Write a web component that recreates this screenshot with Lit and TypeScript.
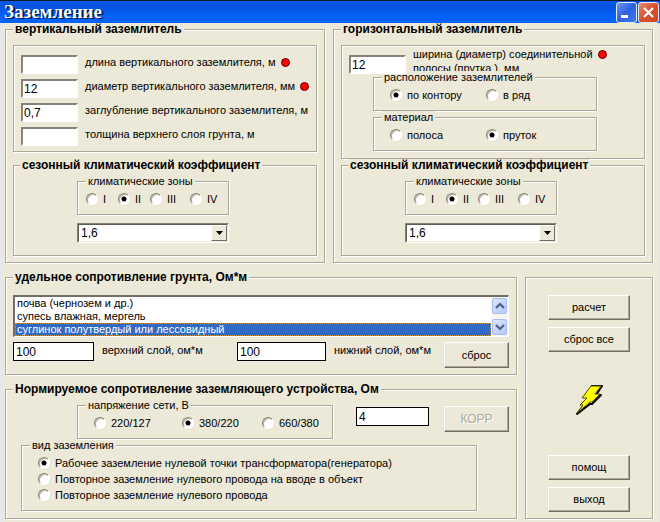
import { LitElement, html, css, svg } from "lit";
import { customElement, property } from "lit/decorators.js";

const shared = css`
  * { box-sizing: border-box; }
  fieldset {
    margin: 0;
    padding: 0;
    min-width: 0;
    border: 1px solid #aca899;
    box-shadow: 1px 1px 0 #fff, inset 1px 1px 0 #fff;
  }
  legend {
    height: 13px;
    line-height: 13px;
    margin-left: 8px;
    padding: 0 2px;
    background: #ece9d8;
    white-space: nowrap;
  }
  .choices {
    display: grid;
    align-items: center;
    height: 22px;
  }
  label { white-space: nowrap; }
  .choice {
    display: flex;
    align-items: center;
    gap: 5px;
  }
  input[type="radio"] {
    appearance: none;
    flex: none;
    width: 12px;
    height: 12px;
    margin: 0;
    border: 1px solid;
    border-color: #85827a #fff #fff #85827a;
    border-radius: 50%;
    background: #fff;
    box-shadow: inset 1px 1px 0 #b5b2a4;
  }
  input[type="radio"]:checked {
    background: radial-gradient(circle at 5px 5px, #000 2px, #fff 3px);
  }
`;

interface Option { text: string; checked?: boolean; }

const radios = (name: string, items: Option[]) => items.map((o) => html`
  <label class="choice"><input type="radio" name=${name} .checked=${!!o.checked}>${o.text}</label>`);

@customElement("seasonal-factor")
class SeasonalFactor extends LitElement {
  @property() name = "zone";

  static styles = [shared, css`
    :host { display: block; }
    .season > legend { font-weight: bold; font-size: 12px; margin-left: 6px; }
    .body { padding: 3px 87px 12px 63px; }
    .zones { padding-bottom: 4px; }
    .choices { grid-template-columns: 32px 32px 40px auto; padding-left: 8px; }
    .combo {
      position: relative;
      margin-top: 8px;
      height: 20px;
      border: 1px solid;
      border-color: #85827a #fff #fff #85827a;
    }
    select {
      appearance: none;
      width: 100%;
      height: 100%;
      padding: 0 2px;
      border: 1px solid;
      border-color: #5d5b52 #ece9d8 #ece9d8 #5d5b52;
      border-radius: 0;
      background: #fff;
      color: #000;
      font: 12px "Liberation Sans", sans-serif;
    }
    .arrow {
      position: absolute;
      inset: 1px 1px 1px auto;
      width: 16px;
      display: grid;
      place-items: center;
      background: #ece9d8;
      border: 1px solid;
      border-color: #fff #716f64 #716f64 #fff;
      pointer-events: none;
    }
  `];

  render() {
    return html`
      <fieldset class="season">
        <legend>сезонный климатический коэффициент</legend>
        <div class="body">
          <fieldset class="zones">
            <legend>климатические зоны</legend>
            <div class="choices">
              ${radios(this.name, [{ text: "I" }, { text: "II", checked: true }, { text: "III" }, { text: "IV" }])}
            </div>
          </fieldset>
          <div class="combo">
            <select aria-label="коэффициент"><option>1,6</option></select>
            <span class="arrow"><svg width="7" height="4" viewBox="0 0 7 4"><path d="M0 0h7L3.500 4z"/></svg></span>
          </div>
        </div>
      </fieldset>`;
  }
}

const chevron = (d: string) => svg`<path d=${d} fill="none" stroke="#4d6185" stroke-width="2.200"/>`;

@customElement("app-root")
class AppRoot extends LitElement {
  static styles = [shared, css`
    :host {
      display: block;
      min-height: 100vh;
      box-sizing: border-box;
      background: #ece9d8;
      color: #000;
      font: 11px/13px "Liberation Sans", Arial, sans-serif;
    }
    .titlebar {
      display: flex;
      align-items: center;
      gap: 1px;
      height: 23px;
      padding: 0 1px 0 4px;
      border-top: 1px solid #10182c;
      background: linear-gradient(#0a5ae6, #0553e0 25%, #0360f8 70%, #0562fb);
    }
    h1 {
      flex: 1;
      margin: 0;
      font: bold 19px/22px "Liberation Serif", serif;
      color: #fff;
      text-shadow: 2px 1px 0 #001a50;
    }
    .caption {
      width: 21px;
      height: 21px;
      padding: 0;
      display: grid;
      place-items: center;
      border: 1px solid #dfe9ff;
      border-radius: 3px;
      background: linear-gradient(135deg, #6d97f0, #2c5fe0 50%, #3f7bf3);
    }
    .caption.close { background: linear-gradient(135deg, #e88b6c, #d8502a 50%, #cc4a22); }
    main {
      padding: 0 6px 3px 4px;
      border: 0 solid #dfe6f5;
      border-width: 0 1px;
    }
    .top {
      display: grid;
      grid-template-columns: 1fr 1fr;
      gap: 8px;
    }
    .bottom {
      display: grid;
      grid-template-columns: 1fr 128px;
      gap: 8px;
      margin-top: 8px;
    }
    .stack { display: grid; gap: 8px; }
    .group { padding: 0 7px; }
    .group > legend { font-weight: bold; font-size: 12px; margin-left: 0; }
    .top .group {
      display: flex;
      flex-direction: column;
      padding: 0 7px 6px;
    }
    .panel {
      border: 1px solid #aca899;
      box-shadow: 1px 1px 0 #fff, inset 1px 1px 0 #fff;
    }
    .top .panel { margin-top: 9px; }
    seasonal-factor { margin-top: auto; }
    .fields {
      display: grid;
      gap: 5px;
      padding: 9px 0 5px 7px;
    }
    .field {
      display: flex;
      gap: 7px;
    }
    .field label { line-height: 15px; }
    input[type="text"] {
      width: 100%;
      height: 19px;
      padding: 0 2px;
      border: 1px solid #000;
      border-radius: 0;
      background: #fff;
      color: #000;
      font: 12px "Liberation Sans", sans-serif;
    }
    .field input[type="text"] {
      flex: none;
      width: 57px;
      padding: 0 1px;
      border: 2px solid;
      border-color: #85827a #fff #fff #85827a;
    }
    .dot {
      flex: none;
      width: 9px;
      height: 9px;
      margin: 3px 0 0 -2px;
      border: 1px solid #5a0000;
      border-radius: 50%;
      background: #f00;
    }
    .strip {
      height: 25px;
      padding: 1px 0 0 7px;
    }
    .strip input[type="text"] { margin-top: 8px; }
    .strip label {
      height: 24px;
      line-height: 14px;
      overflow: hidden;
    }
    .options { margin: 0 47px 7px 31px; }
    .options fieldset { padding-bottom: 4px; }
    .options .choices { grid-template-columns: 96px auto; padding-left: 16px; }
    .list {
      display: flex;
      margin-top: 11px;
      border: 1px solid;
      border-width: 2px 1px 1px 2px;
      border-color: #716f64 #fff #fff #716f64;
      background: #fff;
    }
    .list select {
      flex: 1;
      min-width: 0;
      height: 39px;
      padding: 0;
      border: 0;
      border-radius: 0;
      outline: 0;
      overflow: hidden;
      background: #fff;
      font: 11px/13px "Liberation Sans", sans-serif;
    }
    .list option {
      height: 13px;
      min-height: 13px;
      padding: 0 2px;
      line-height: 13px;
      color: #000;
    }
    .list option:checked {
      background: #316ac5 linear-gradient(#316ac5, #316ac5);
      color: #fff;
      outline: 1px dotted #c99a4a;
      outline-offset: -1px;
    }
    .scroll {
      display: flex;
      flex-direction: column;
      justify-content: space-between;
      width: 17px;
      padding: 1px;
      background: #f6f6f1;
    }
    .scroll button {
      display: grid;
      place-items: center;
      height: 16px;
      padding: 0;
      border: 1px solid #a9bdf0;
      border-radius: 2px;
      background: linear-gradient(135deg, #dbe5fe, #b5c8fb);
    }
    .layers {
      display: grid;
      grid-template-columns: 81px 127px 89px 1fr 65px;
      gap: 8px;
      margin: 5px 0 6px;
    }
    .layers label { line-height: 16px; }
    .push {
      width: 100%;
      height: 26px;
      padding: 0;
      border: 1px solid;
      border-color: #fff #716f64 #716f64 #fff;
      box-shadow: inset -1px -1px 0 #aca899;
      background: #ece9d8;
      color: #000;
      font: 11px/13px "Liberation Sans", sans-serif;
    }
    .push:disabled { color: #aca899; text-shadow: 1px 1px 0 #fff; font-size: 12px; }
    .supply {
      display: grid;
      grid-template-columns: 1fr 73px 65px;
      column-gap: 15px;
      padding: 3px 0 0 64px;
    }
    .supply fieldset { margin-right: 8px; padding-bottom: 4px; }
    .supply .choices { grid-template-columns: 88px 80px auto; padding-left: 16px; }
    .supply input[type="text"] { margin-top: 8px; }
    .supply .push { margin-top: 7px; }
    .kind { margin: 0 32px 7px 8px; }
    .kinds { padding: 3px 0 7px 16px; }
    .kinds .choice { height: 16px; }
    .actions {
      display: flex;
      flex-direction: column;
      align-items: center;
      gap: 7px;
      margin-top: 6px;
      padding: 17px 22px 6px;
    }
    .actions .push { height: 25px; }
    .bolt { margin: auto; }
  `];

  render() {
    return html`
      <header class="titlebar">
        <h1>Заземление</h1>
        <button class="caption" aria-label="Свернуть">
          <svg width="19" height="19" viewBox="0 0 19 19"><path d="M4 12h7v3H4z" fill="#fff"/></svg>
        </button>
        <button class="caption close" aria-label="Закрыть">
          <svg width="19" height="19" viewBox="0 0 19 19"><path d="M5 5l9 9M14 5l-9 9" stroke="#fff" stroke-width="2.200"/></svg>
        </button>
      </header>
      <main>
        <div class="top">
          <fieldset class="group">
            <legend>вертикальный заземлитель</legend>
            <div class="panel fields">
              ${[
                { text: "длина вертикального заземлителя, м", value: "", dot: true },
                { text: "диаметр вертикального заземлителя, мм", value: "12", dot: true },
                { text: "заглубление вертикального заземлителя, м", value: "0,7", dot: false },
                { text: "толщина верхнего слоя грунта, м", value: "", dot: false },
              ].map((f, i) => html`
                <div class="field">
                  <input type="text" id="v${i}" .value=${f.value}>
                  <label for="v${i}">${f.text}</label>
                  ${f.dot ? html`<span class="dot"></span>` : ""}
                </div>`)}
            </div>
            <seasonal-factor name="zone-v"></seasonal-factor>
          </fieldset>
          <fieldset class="group">
            <legend>горизонтальный заземлитель</legend>
            <div class="panel">
              <div class="field strip">
                <input type="text" id="strip" .value=${"12"}>
                <label for="strip">ширина (диаметр) соединительной<br>полосы (прутка ), мм</label>
                <span class="dot"></span>
              </div>
              <div class="options">
                <fieldset>
                  <legend>расположение заземлителей</legend>
                  <div class="choices">${radios("layout", [{ text: "по контору", checked: true }, { text: "в ряд" }])}</div>
                </fieldset>
                <fieldset>
                  <legend>материал</legend>
                  <div class="choices">${radios("material", [{ text: "полоса" }, { text: "пруток", checked: true }])}</div>
                </fieldset>
              </div>
            </div>
            <seasonal-factor name="zone-h"></seasonal-factor>
          </fieldset>
        </div>
        <div class="bottom">
          <div class="stack">
            <fieldset class="group">
              <legend>удельное сопротивление грунта, Ом*м</legend>
              <div class="list">
                <select size="3" aria-label="Грунт">
                  <option>почва (чернозем и др.)</option>
                  <option>супесь влажная, мергель</option>
                  <option selected>суглинок полутвердый или лессовидный</option>
                </select>
                <div class="scroll">
                  <button aria-label="Вверх"><svg width="10" height="8" viewBox="0 0 10 8">${chevron("M1 6l4-4 4 4")}</svg></button>
                  <button aria-label="Вниз"><svg width="10" height="8" viewBox="0 0 10 8">${chevron("M1 2l4 4 4-4")}</svg></button>
                </div>
              </div>
              <div class="layers">
                <input type="text" id="upper" .value=${"100"}>
                <label for="upper">верхний слой, ом*м</label>
                <input type="text" id="lower" .value=${"100"}>
                <label for="lower">нижний слой, ом*м</label>
                <button class="push">сброс</button>
              </div>
            </fieldset>
            <fieldset class="group">
              <legend>Нормируемое сопротивление заземляющего устройства, Ом</legend>
              <div class="supply">
                <fieldset>
                  <legend>напряжение сети, В</legend>
                  <div class="choices">
                    ${radios("voltage", [{ text: "220/127" }, { text: "380/220", checked: true }, { text: "660/380" }])}
                  </div>
                </fieldset>
                <input type="text" aria-label="Сопротивление, Ом" .value=${"4"}>
                <button class="push" disabled>КОРР</button>
              </div>
              <fieldset class="kind">
                <legend>вид заземления</legend>
                <div class="kinds">
                  ${radios("kind", [
                    { text: "Рабочее заземление нулевой точки трансформатора(генератора)", checked: true },
                    { text: "Повторное заземление нулевого провода на вводе в объект" },
                    { text: "Повторное заземление нулевого провода" },
                  ])}
                </div>
              </fieldset>
            </fieldset>
          </div>
          <div class="panel actions">
            <button class="push">расчет</button>
            <button class="push">сброс все</button>
            <svg class="bolt" width="28" height="38" viewBox="0 0 28 38">
              <path d="M16 1h11l-6 9h5l-9 9h-2L2 29l6-7" fill="none" stroke="#000" stroke-width="2" stroke-linejoin="round"/>
              <path d="M16 1h10l-6 8h5l-8 8h-2L2 28l6-8H5l7-7H7z" fill="#ff0" stroke="#4a4a00"/>
            </svg>
            <button class="push">помощ</button>
            <button class="push">выход</button>
          </div>
        </div>
      </main>`;
  }
}
